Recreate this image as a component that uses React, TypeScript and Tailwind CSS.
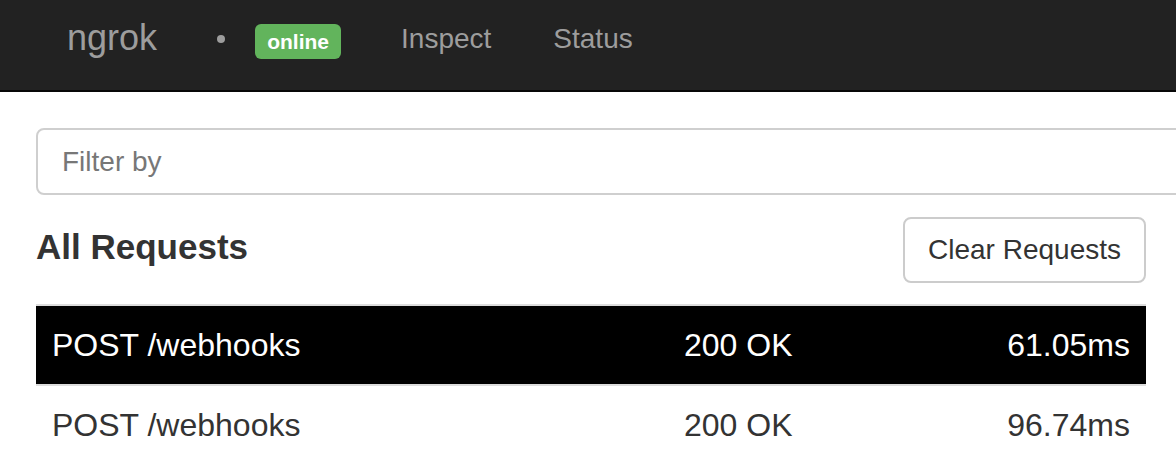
import React from "react";

const rows = [
  { path: "POST /webhooks", status: "200 OK", time: "61.05ms", active: true },
  { path: "POST /webhooks", status: "200 OK", time: "96.74ms", active: false },
];

export default function App() {
  return (
    <div
      className="w-[1176px] h-[462px] overflow-hidden bg-white"
      style={{ fontFamily: '"Liberation Sans", Arial, Helvetica, sans-serif' }}
    >
      <nav className="h-[92px] bg-[#222222] border-b-2 border-[#080808] flex items-start pl-[67px] text-[#9d9d9d]">
        <span className="mt-[18px] text-[36px] leading-[40px]">ngrok</span>
        <span className="mt-[35px] ml-[60px] w-[8px] h-[8px] rounded-full bg-[#9d9d9d]" />
        <span className="mt-[24px] ml-[30px] w-[86px] h-[35px] rounded-[6px] bg-[#62b45c] flex items-center justify-center text-white font-bold text-[21px] leading-none">
          online
        </span>
        <span className="mt-[23px] ml-[60px] text-[28px] leading-[32px]">Inspect</span>
        <span className="mt-[23px] ml-[62px] text-[28px] leading-[32px]">Status</span>
      </nav>

      <main className="px-[36px]">
        <div className="mt-[36px] w-[1180px] h-[67px] border-2 border-[#cfcfcf] rounded-[8px] flex items-center pl-[24px] text-[28px] text-[#777777]">
          Filter by
        </div>

        <div className="mt-[22px] w-[1110px] flex justify-between items-start">
          <h4 className="mt-[10px] text-[35px] leading-[40px] font-bold text-[#333333]">
            All Requests
          </h4>
          <button className="w-[243px] h-[66px] border-2 border-[#cccccc] rounded-[8px] bg-white text-[28px] text-[#333333] flex items-center justify-center">
            Clear Requests
          </button>
        </div>

        <div className="mt-[21px] w-[1110px]">
          {rows.map((r, i) => (
            <div
              key={i}
              className={`border-t-2 border-[#dddddd] h-[80px] flex items-center px-[16px] text-[32px] leading-[40px] ${
                r.active ? "bg-black text-white" : "bg-white text-[#333333]"
              }`}
            >
              <span className="w-[632px]">{r.path}</span>
              <span className="flex-1">{r.status}</span>
              <span className="text-right">{r.time}</span>
            </div>
          ))}
        </div>
      </main>
    </div>
  );
}
